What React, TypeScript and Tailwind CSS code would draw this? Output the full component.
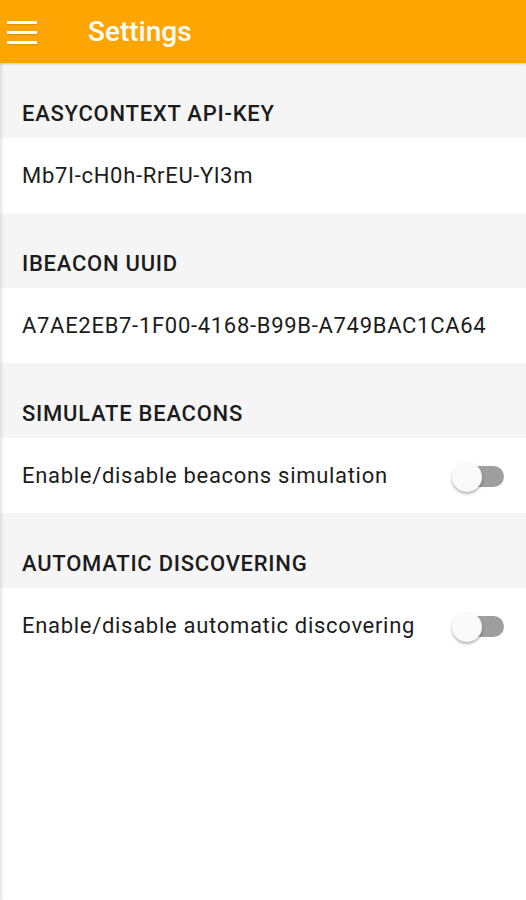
import React from 'react';

const sections = [
  { title: 'EASYCONTEXT API-KEY', value: 'Mb7I-cH0h-RrEU-Yl3m', toggle: false },
  { title: 'IBEACON UUID', value: 'A7AE2EB7-1F00-4168-B99B-A749BAC1CA64', toggle: false },
  { title: 'SIMULATE BEACONS', value: 'Enable/disable beacons simulation', toggle: true },
  { title: 'AUTOMATIC DISCOVERING', value: 'Enable/disable automatic discovering', toggle: true },
];

function Toggle() {
  return (
    <div className="relative w-[52px] h-[30px] flex items-center mt-[2px]">
      <div className="absolute right-0 w-[46px] h-[21px] rounded-full bg-[#9e9e9e]" />
      <div className="absolute left-0 w-[30px] h-[30px] rounded-full bg-[#fafafa] shadow-[0_2px_3px_rgba(0,0,0,0.3)]" />
    </div>
  );
}

export default function App() {
  return (
    <div className="w-[526px] h-[900px] bg-white flex flex-col font-['Roboto',sans-serif] text-[#1c1c1c] relative overflow-hidden">
      {/* toolbar */}
      <div className="h-[63px] bg-[#ffa502] flex items-center shadow-[0_1px_2px_rgba(0,0,0,0.2)] z-10 shrink-0">
        <div className="w-[30px] ml-[7px] flex flex-col gap-[7px] mt-[1px]">
          <div className="h-[3px] bg-white shadow-[0_1px_1px_rgba(0,0,0,0.15)]" />
          <div className="h-[3px] bg-white shadow-[0_1px_1px_rgba(0,0,0,0.15)]" />
          <div className="h-[3px] bg-white shadow-[0_1px_1px_rgba(0,0,0,0.15)]" />
        </div>
        <h1 className="ml-[51px] text-white text-[28px] font-medium leading-none">Settings</h1>
      </div>

      {sections.map((s) => (
        <div key={s.title}>
          <div className="h-[75px] bg-[#f5f5f5] flex items-end pb-[10px] px-[22px]">
            <span className="text-[22px] leading-[28px] font-medium tracking-[0.75px]">{s.title}</span>
          </div>
          <div className="h-[75px] bg-white flex items-center justify-between pl-[22px] pr-[22px]">
            <span className="text-[22px] leading-[28px] tracking-[0.7px]">{s.value}</span>
            {s.toggle && <Toggle />}
          </div>
        </div>
      ))}

      <div className="absolute left-0 top-[63px] bottom-0 w-[4px] bg-gradient-to-r from-black/10 to-transparent" />
    </div>
  );
}
